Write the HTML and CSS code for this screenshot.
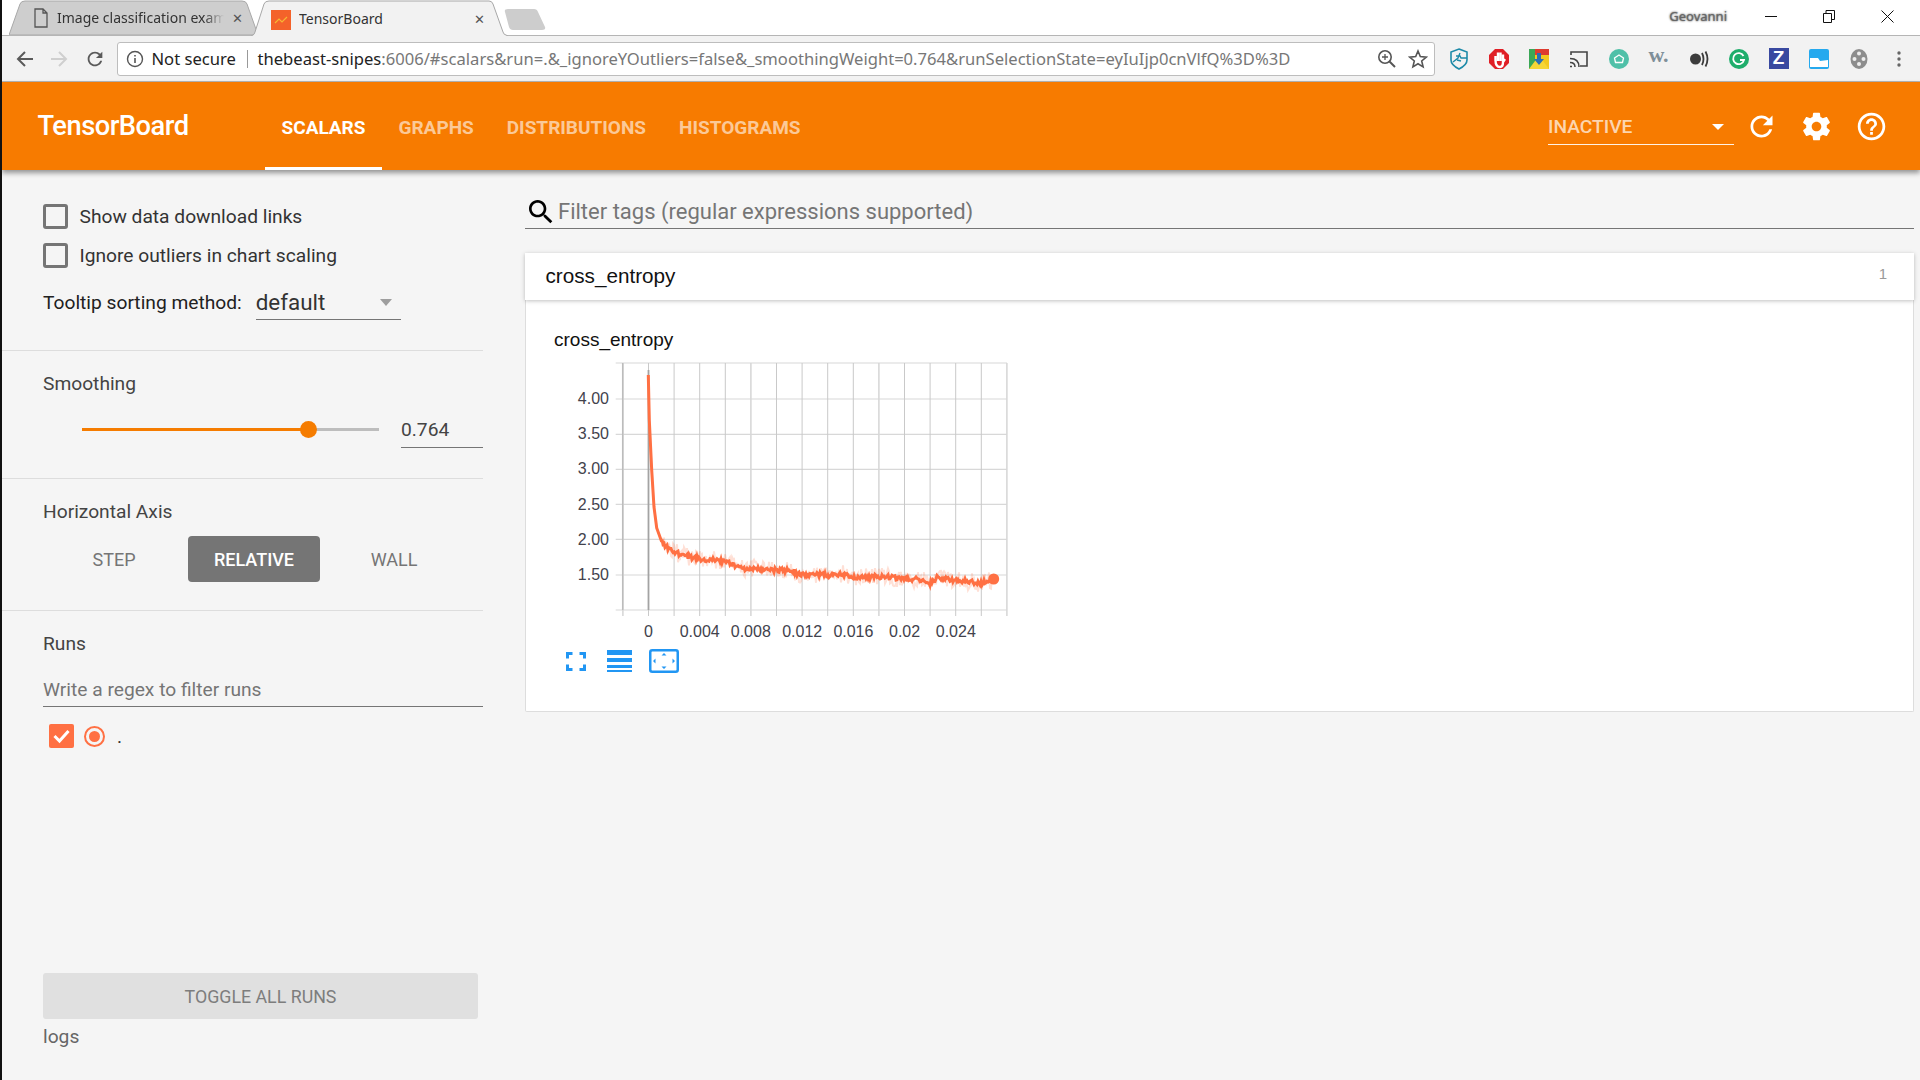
FILE: index.html
```html
<!DOCTYPE html>
<html lang="en">
<head>
    <meta charset="UTF-8">
    <meta name="viewport" content="width=device-width, initial-scale=1.0">
    <title>TensorBoard</title>
    <link rel="stylesheet" href="styles.css">
</head>
<body>
    <!-- browser tabs -->
    <div class="tabstrip">
        <div class="tab tab-back">
            <svg class="tab-shape" viewBox="0 0 249 35"><path d="M0 35L11 4Q12 1 16 1L233 1Q237 1 238 4L249 35Z" fill="#cecece" stroke="#a8a8a8"/></svg>
            <svg class="fav" width="16" height="20" viewBox="0 0 16 20"><path d="M2 1h8l4 4v14H2zM10 1v4h4" fill="none" stroke="#555" stroke-width="1.3"/></svg>
            <span class="tab-title tab-title-fade">Image classification exam</span>
            <span class="tab-close">✕</span>
        </div>
        <div class="tab tab-front">
            <svg class="tab-shape" viewBox="0 0 257 36"><path d="M0 36L2 35Q3 35 4 32L13 4Q14 1 18 1L238 1Q241 1 242 4L252 32Q253 35 255 35L257 36" fill="#f2f2f2" stroke="#a8a8a8"/></svg>
            <svg class="fav-tb" width="20" height="20" viewBox="0 0 20 20"><rect width="20" height="20" fill="#f4622a"/><path d="M4 13l4-4 3 3 5-5" fill="none" stroke="#f7b733" stroke-width="1.2"/></svg>
            <span class="tab-title">TensorBoard</span>
            <span class="tab-close">✕</span>
        </div>
        <svg class="new-tab" width="42" height="22" viewBox="0 0 42 22"><path d="M1 3Q0 0 4 0L30 0Q33 0 34 3L41 18Q42 21 38 21L9 21Q6 21 5 18Z" fill="#cdcdcd"/></svg>
        <div class="window-ctrl">
            <span class="profile">Geovanni</span>
            <svg class="win-btn" width="12" height="12" viewBox="0 0 12 12"><path d="M0 6.5h12" stroke="#111"/></svg>
            <svg class="win-btn" width="12" height="13" viewBox="0 0 12 13"><path d="M.5 3.5h8v9h-8zM3 3.5v-3h8.5v9H8.5" fill="none" stroke="#111"/></svg>
            <svg class="win-btn" width="13" height="13" viewBox="0 0 13 13"><path d="M.5.5l12 12M12.5.5l-12 12" stroke="#111"/></svg>
        </div>
    </div>

    <!-- browser toolbar -->
    <div class="toolbar">
        <div class="nav-btns">
            <svg width="18" height="18" viewBox="0 0 18 18"><path d="M17 9H3M9 2L2 9l7 7" fill="none" stroke="#5a5a5a" stroke-width="2"/></svg>
            <svg width="18" height="18" viewBox="0 0 18 18"><path d="M1 9h14M9 2l7 7-7 7" fill="none" stroke="#cfcfcf" stroke-width="2"/></svg>
            <svg width="22" height="22" viewBox="0 0 24 24"><path fill="#5a5a5a" d="M17.65 6.35C16.2 4.9 14.21 4 12 4c-4.42 0-7.99 3.58-7.99 8s3.57 8 7.99 8c3.73 0 6.84-2.55 7.73-6h-2.08c-.82 2.33-3.04 4-5.65 4-3.31 0-6-2.69-6-6s2.69-6 6-6c1.66 0 3.14.69 4.22 1.78L13 11h7V4l-2.35 2.35z"/></svg>
        </div>
        <div class="omnibox">
            <svg class="info-icon" width="18" height="18" viewBox="0 0 18 18"><circle cx="9" cy="9" r="7.5" fill="none" stroke="#555" stroke-width="1.4"/><path d="M9 8v5M9 5v1.6" stroke="#555" stroke-width="1.6"/></svg>
            <span class="not-secure">Not secure</span>
            <span class="omni-sep"></span>
            <span class="url"><span class="url-host">thebeast-snipes</span>:6006/#scalars&amp;run=.&amp;_ignoreYOutliers=false&amp;_smoothingWeight=0.764&amp;runSelectionState=eyIuIjp0cnVlfQ%3D%3D</span>
            <svg class="omni-zoom" width="20" height="20" viewBox="0 0 20 20"><circle cx="8" cy="8" r="6.2" fill="none" stroke="#555" stroke-width="1.6"/><path d="M12.5 12.5L18 18" stroke="#555" stroke-width="2"/><path d="M5 8h6M8 5v6" stroke="#555" stroke-width="1.3"/></svg>
            <svg class="omni-star" width="20" height="20" viewBox="0 0 20 20"><path d="M10 2l2.3 5.6 6 .5-4.6 3.9 1.4 5.9L10 14.800l-5.100 3.100 1.400-5.900L1.700 8.100l6-.5z" fill="none" stroke="#555" stroke-width="1.6"/></svg>
        </div>
        <div class="ext-icons">
            <span class="ext"><svg width="22" height="24" viewBox="0 0 22 24"><path d="M11 2l8 3v8q0 5-8 9-8-4-8-9V5z" fill="none" stroke="#1d8aa8" stroke-width="1.6"/><path d="M5 15l5-4 2-5M8 9h4l1 2h6M9 13l4 1" fill="none" stroke="#1d8aa8" stroke-width="1.4"/></svg></span>
            <span class="ext"><svg width="20" height="22" viewBox="0 0 20 22"><path d="M6 1h8l6 6v8l-6 6H6l-6-6V7z" fill="#e01f26"/><path d="M6.500 13V8M9 13V4.500M11.500 13V4.500M14 14V6.500M6.500 12q0 7 4.500 7 3 0 3-5l2-3" fill="none" stroke="#fff" stroke-width="2.400"/></svg></span>
            <span class="ext"><svg width="20" height="20" viewBox="0 0 20 20"><rect width="20" height="20" fill="#f2c81e"/><path d="M0 0h20v6H0z" fill="#dd3b2f"/><path d="M0 0h6v20H0z" fill="#3aa757"/><path d="M0 20l20 0-6-8-8 0z" fill="#f6d636"/><path d="M8 4h4v6h3l-5 6-5-6h3z" fill="#2a6fb5"/></svg></span>
            <span class="ext"><svg width="20" height="18" viewBox="0 0 20 18"><path d="M2 5V2h16v14h-7" fill="none" stroke="#444" stroke-width="1.600"/><path d="M1 16.500h2M1 12.500q5 0 5 4.500M1 8.500q9 0 9 8.500" fill="none" stroke="#444" stroke-width="1.500"/></svg></span>
            <span class="ext"><svg width="20" height="20" viewBox="0 0 20 20"><circle cx="10" cy="10" r="10" fill="#4fc0a8"/><path d="M5.500 9L10 6l4.500 3-1 4.500h-7z" fill="none" stroke="#fff" stroke-width="1.300"/></svg></span>
            <span class="ext ext-w">w.</span>
            <span class="ext"><svg width="20" height="18" viewBox="0 0 20 18"><circle cx="6.500" cy="9" r="5.500" fill="#3c3c3c"/><path d="M13 3q3 6 0 12M16.500 1.500q4 7.500 0 15" fill="none" stroke="#3c3c3c" stroke-width="1.800"/></svg></span>
            <span class="ext"><svg width="20" height="20" viewBox="0 0 20 20"><circle cx="10" cy="10" r="10" fill="#1fae6c"/><path d="M14.500 7a5.500 5.500 0 1 0 .5 4h-4" fill="none" stroke="#fff" stroke-width="1.800"/></svg></span>
            <span class="ext ext-z">Z</span>
            <span class="ext"><svg width="20" height="20" viewBox="0 0 20 20"><rect width="20" height="20" rx="2" fill="#25a9ee"/><path d="M1 9h8l2 3 8-1v7H1z" fill="#fff"/></svg></span>
            <span class="ext"><svg width="20" height="22" viewBox="0 0 20 22"><ellipse cx="10" cy="11" rx="8.500" ry="10" fill="#8d8d8d"/><circle cx="10" cy="5.500" r="2" fill="#eee"/><circle cx="10" cy="16" r="2" fill="#eee"/><circle cx="5.500" cy="11" r="2" fill="#eee"/><circle cx="14.500" cy="11" r="2" fill="#eee"/></svg></span>
            <span class="ext"><svg width="4" height="16" viewBox="0 0 4 16"><circle cx="2" cy="2" r="1.700" fill="#666"/><circle cx="2" cy="8" r="1.700" fill="#666"/><circle cx="2" cy="14" r="1.700" fill="#666"/></svg></span>
        </div>
    </div>

    <!-- tensorboard header -->
    <header class="tb-header">
        <div class="tb-title">TensorBoard</div>
        <nav class="tb-tabs">
            <a class="tb-tab active">SCALARS</a>
            <a class="tb-tab">GRAPHS</a>
            <a class="tb-tab">DISTRIBUTIONS</a>
            <a class="tb-tab">HISTOGRAMS</a>
        </nav>
        <div class="tb-right">
            <div class="inactive-select">
                <span>INACTIVE</span>
                <span class="caret caret-white"></span>
            </div>
            <svg class="tb-icon" viewBox="0 0 24 24"><path d="M17.65 6.350C16.200 4.900 14.210 4 12 4c-4.420 0-7.990 3.580-7.990 8s3.570 8 7.990 8c3.730 0 6.840-2.550 7.730-6h-2.080c-.82 2.330-3.040 4-5.650 4-3.310 0-6-2.690-6-6s2.690-6 6-6c1.660 0 3.140.69 4.220 1.780L13 11h7V4l-2.350 2.350z"/></svg>
            <svg class="tb-icon" viewBox="0 0 24 24"><path d="M19.430 12.980c.04-.32.07-.64.07-.98s-.03-.66-.07-.98l2.110-1.650c.19-.15.24-.42.12-.64l-2-3.460c-.12-.22-.39-.3-.61-.22l-2.490 1c-.52-.4-1.080-.73-1.690-.98l-.38-2.650C14.460 2.180 14.250 2 14 2h-4c-.25 0-.46.18-.49.42l-.38 2.650c-.61.25-1.170.59-1.690.98l-2.490-1c-.23-.09-.49 0-.61.22l-2 3.460c-.13.22-.07.49.12.64l2.110 1.650c-.04.32-.07.65-.07.98s.03.66.07.98l-2.110 1.650c-.19.15-.24.42-.12.64l2 3.460c.12.22.39.3.61.22l2.490-1c.52.4 1.080.73 1.690.98l.38 2.650c.03.24.24.42.49.42h4c.25 0 .46-.18.49-.42l.38-2.650c.61-.25 1.170-.59 1.690-.98l2.490 1c.23.09.49 0 .61-.22l2-3.460c.12-.22.07-.49-.12-.64l-2.110-1.650zM12 15.500c-1.930 0-3.500-1.570-3.500-3.500s1.570-3.500 3.500-3.500 3.500 1.570 3.500 3.500-1.570 3.500-3.500 3.500z"/></svg>
            <svg class="tb-icon" viewBox="0 0 24 24"><path d="M11 18h2v-2h-2v2zm1-16C6.480 2 2 6.480 2 12s4.480 10 10 10 10-4.480 10-10S17.520 2 12 2zm0 18c-4.410 0-8-3.590-8-8s3.590-8 8-8 8 3.590 8 8-3.590 8-8 8zm0-14c-2.210 0-4 1.790-4 4h2c0-1.100.9-2 2-2s2 .9 2 2c0 2-3 1.750-3 5h2c0-2.250 3-2.500 3-5 0-2.210-1.790-4-4-4z"/></svg>
        </div>
    </header>

    <div class="content">
        <aside class="sidebar">
            <section class="side-section options">
                <label class="option"><span class="checkbox"></span>Show data download links</label>
                <label class="option"><span class="checkbox"></span>Ignore outliers in chart scaling</label>
                <div class="tooltip-row">
                    <span>Tooltip sorting method:</span>
                    <div class="tooltip-select">default<span class="caret caret-gray"></span></div>
                </div>
            </section>
            <section class="side-section smoothing">
                <div class="side-label">Smoothing</div>
                <div class="slider-row">
                    <div class="slider">
                        <div class="slider-fill"></div>
                        <div class="slider-knob"></div>
                    </div>
                    <div class="slider-value">0.764</div>
                </div>
            </section>
            <section class="side-section axis">
                <div class="side-label">Horizontal Axis</div>
                <div class="axis-btns">
                    <span class="axis-btn axis-step">STEP</span>
                    <span class="axis-btn axis-relative">RELATIVE</span>
                    <span class="axis-btn axis-wall">WALL</span>
                </div>
            </section>
            <section class="runs">
                <div class="side-label">Runs</div>
                <div class="runs-filter">Write a regex to filter runs</div>
                <div class="run-row">
                    <span class="run-check"><svg width="19" height="16" viewBox="0 0 19 16"><path d="M2.500 8l5 5L16.500 3" fill="none" stroke="#fff" stroke-width="3"/></svg></span>
                    <span class="run-radio"><span></span></span>
                    <span class="run-name">.</span>
                </div>
                <div class="toggle-btn">TOGGLE ALL RUNS</div>
                <div class="logdir">logs</div>
            </section>
        </aside>

        <main class="main">
            <div class="tag-filter">
                <svg width="32" height="32" viewBox="0 0 24 24"><path d="M15.500 14h-.79l-.28-.27C15.410 12.590 16 11.110 16 9.500 16 5.910 13.090 3 9.500 3S3 5.910 3 9.500 5.910 16 9.500 16c1.610 0 3.090-.59 4.230-1.570l.27.28v.79l5 4.990L20.490 19l-4.990-5zm-6 0C7.010 14 5 11.990 5 9.500S7.010 5 9.500 5 14 7.010 14 9.500 11.990 14 9.500 14z"/></svg>
                <span>Filter tags (regular expressions supported)</span>
            </div>
            <div class="category-head">
                <span>cross_entropy</span>
                <span class="category-count">1</span>
            </div>
            <div class="category-body">
                <div class="chart-title">cross_entropy</div>
                <svg id="chart" class="chart" viewBox="554 350 470 290" width="470" height="290">
                    <g id="grid"></g>
                    <g class="chart-y">
                        <text x="609" y="404">4.00</text>
                        <text x="609" y="439">3.50</text>
                        <text x="609" y="474">3.00</text>
                        <text x="609" y="509.500">2.50</text>
                        <text x="609" y="545">2.00</text>
                        <text x="609" y="580">1.50</text>
                    </g>
                    <g class="chart-x">
                        <text x="648.500" y="637">0</text>
                        <text x="699.700" y="637">0.004</text>
                        <text x="750.800" y="637">0.008</text>
                        <text x="802.200" y="637">0.012</text>
                        <text x="853.400" y="637">0.016</text>
                        <text x="904.600" y="637">0.02</text>
                        <text x="955.800" y="637">0.024</text>
                    </g>
                    <path id="line-raw" class="line-raw"/>
                    <path id="line-smooth" class="line-smooth"/>
                    <circle cx="993.700" cy="579" r="5.500" fill="#ff7043"/>
                </svg>
                <div class="chart-actions">
                    <svg width="20" height="19" viewBox="0 0 20 19"><path d="M1.500 6.500V1.500H6.500M13.500 1.500H18.500V6.500M18.500 12.500V17.500H13.500M6.500 17.500H1.500V12.500" fill="none" stroke="#2196f3" stroke-width="3"/></svg>
                    <svg width="25" height="22" viewBox="0 0 25 22"><path d="M0 0h25v5H0zM0 8h25v4H0zM0 15h25v3H0zM0 20h25v2H0z" fill="#2196f3"/></svg>
                    <svg width="30" height="24" viewBox="0 0 30 24"><rect x="1.250" y="1.250" width="27.500" height="21.500" rx="2" fill="none" stroke="#2196f3" stroke-width="2.500"/><path d="M15 4l2.500 2.500h-5zM15 20l2.500-2.500h-5zM4 12l2.500-2.500v5zM26 12l-2.500-2.500v5z" fill="#2196f3"/></svg>
                </div>
            </div>
        </main>
    </div>
    <script src="script.js"></script>
</body>
</html>
```

FILE: styles.css
```css
* {
    box-sizing: border-box;
}

body {
    margin: 0;
    height: 100vh;
    overflow: hidden;
    display: flex;
    flex-direction: column;
    background: #f5f5f5;
    border-left: 2px solid #111;
    font-family: Roboto, sans-serif;
    color: #212121;
}

/* browser chrome */
.tabstrip {
    height: 35px;
    display: flex;
    background: #fff;
    padding-left: 7px;
    flex-shrink: 0;
}

.tab {
    position: relative;
    height: 35px;
    display: flex;
    align-items: center;
    font-family: "Noto Sans", sans-serif;
    font-size: 14px;
    color: #333;
}

.tab-back {
    width: 249px;
    margin-right: -7px;
    padding-left: 24px;
}

.tab-front {
    width: 257px;
    height: 36px;
    z-index: 1;
    padding-left: 20px;
}

.tab-shape {
    position: absolute;
    left: 0;
    top: 0;
    width: 100%;
    height: 100%;
}

.fav,
.fav-tb,
.tab-title,
.tab-close {
    position: relative;
}

.fav {
    margin-right: 8px;
}

.fav-tb {
    margin-right: 8px;
    margin-top: 3px;
}

.tab-title {
    white-space: nowrap;
    overflow: hidden;
}

.tab-back .tab-title {
    width: 167px;
    -webkit-mask-image: linear-gradient(to right, #000 88%, transparent);
    mask-image: linear-gradient(to right, #000 88%, transparent);
}

.tab-front .tab-title {
    width: 175px;
    margin-top: 1px;
}

.tab-close {
    font-size: 13px;
    color: #555;
}

.tab-back .tab-close {
    margin-left: 8px;
}

.tab-front .tab-close {
    margin-top: 2px;
}

.new-tab {
    margin: 9px 0 0 -4px;
}

.window-ctrl {
    margin-left: auto;
    display: flex;
    align-items: center;
    height: 32px;
    padding-right: 26px;
}

.profile {
    font-family: "Noto Sans", sans-serif;
    font-size: 13px;
    color: #666;
    text-shadow: 0 0 2px #222;
    margin-right: 38px;
}

.win-btn {
    margin-left: 46px;
}

.win-btn:first-of-type {
    margin-left: 0;
}

.toolbar {
    height: 47px;
    display: flex;
    align-items: center;
    background: #f2f2f2;
    border-top: 1px solid #b5b5b5;
    border-bottom: 1px solid #b5b5b5;
    flex-shrink: 0;
}

.nav-btns {
    width: 114.500px;
    display: flex;
    align-items: center;
    gap: 16px;
    padding-left: 14px;
}

.omnibox {
    width: 1318px;
    height: 34px;
    display: flex;
    align-items: center;
    background: #fff;
    border: 1px solid #bdbdbd;
    border-radius: 3px;
    font-family: "Noto Sans", sans-serif;
    font-size: 16.600px;
    white-space: nowrap;
}

.info-icon {
    margin-left: 8px;
    margin-right: 8px;
}

.not-secure {
    width: 95px;
    color: #222;
}

.omni-sep {
    width: 1px;
    height: 18px;
    background: #999;
    margin-right: 10px;
}

.url {
    width: 1112px;
    color: #777;
}

.url-host {
    color: #222;
}

.omni-zoom {
    margin-left: 7px;
}

.omni-star {
    margin-left: 11px;
}

.ext-icons {
    display: flex;
    padding-left: 4px;
}

.ext {
    width: 40px;
    height: 26px;
    display: flex;
    align-items: center;
    justify-content: center;
}

.ext-w {
    font-family: "Liberation Serif", serif;
    font-weight: bold;
    font-size: 22px;
    color: #7f8f99;
    padding-bottom: 8px;
}

.ext-z {
    width: 20px;
    height: 21px;
    margin: 2px 10px 0;
    background: #3949a0;
    color: #fff;
    font-family: "Liberation Sans", sans-serif;
    font-weight: bold;
    font-size: 19px;
}

/* tensorboard header */
.tb-header {
    height: 88px;
    display: flex;
    align-items: center;
    background: #f77b00;
    color: #fff;
    box-shadow: 0 3px 5px rgba(0, 0, 0, 0.4);
    position: relative;
    z-index: 2;
    flex-shrink: 0;
}

.tb-title {
    width: 263px;
    padding-left: 35.500px;
    font-size: 27.300px;
    font-weight: 500;
    letter-spacing: -0.5px;
}

.tb-tabs {
    display: flex;
    height: 100%;
}

.tb-tab {
    display: flex;
    align-items: center;
    padding: 5px 16.500px 0;
    font-size: 19px;
    font-weight: 700;
    color: rgba(255, 255, 255, 0.6);
    border-bottom: 3px solid transparent;
}

.tb-tab.active {
    color: #fff;
    border-bottom-color: #fff;
}

.tb-right {
    margin-left: auto;
    display: flex;
    align-items: center;
    padding-right: 32px;
}

.inactive-select {
    width: 186px;
    height: 36px;
    display: flex;
    align-items: center;
    justify-content: space-between;
    padding-right: 10px;
    border-bottom: 1px solid rgba(255, 255, 255, 0.9);
    font-size: 19.200px;
    font-weight: 500;
    color: rgba(255, 255, 255, 0.7);
    margin-top: 2px;
    margin-right: 11px;
}

.caret {
    width: 0;
    height: 0;
    border-left: 6px solid transparent;
    border-right: 6px solid transparent;
}

.caret-white {
    border-top: 6.500px solid #fff;
}

.caret-gray {
    border-top: 7px solid #9e9e9e;
    margin-right: 9px;
    margin-top: 2px;
}

.tb-icon {
    width: 33px;
    height: 33px;
    fill: #fff;
    margin-left: 22px;
}

.tb-icon:first-of-type {
    margin-left: 0;
}

/* main layout */
.content {
    flex: 1;
    display: flex;
    min-height: 0;
}

.sidebar {
    width: 481px;
    flex-shrink: 0;
    display: flex;
    flex-direction: column;
    font-size: 19.200px;
}

.side-section {
    border-bottom: 1px solid #ddd;
    padding-left: 41px;
}

.options {
    height: 181px;
    padding-top: 34px;
}

.option {
    height: 25px;
    margin-bottom: 14px;
    display: flex;
    align-items: center;
    gap: 11.500px;
    color: #333;
}

.checkbox {
    width: 25px;
    height: 25px;
    border: 3px solid #757575;
    border-radius: 3px;
}

.tooltip-row {
    margin-top: 16px;
    display: flex;
    align-items: center;
    gap: 14px;
}

.tooltip-select {
    width: 145px;
    height: 36px;
    display: flex;
    align-items: center;
    justify-content: space-between;
    border-bottom: 1px solid #757575;
    font-size: 22.400px;
    color: #333;
}

.side-label {
    height: 24px;
    line-height: 24px;
    color: #444;
}

.smoothing {
    height: 128px;
    padding-top: 21px;
}

.slider-row {
    display: flex;
    margin-top: 17px;
    height: 35px;
}

.slider {
    position: relative;
    width: 297px;
    height: 3px;
    margin: 15px 0 0 39px;
    background: #bdbdbd;
}

.slider-fill {
    width: 76.400%;
    height: 100%;
    background: #f57c00;
}

.slider-knob {
    position: absolute;
    left: 76.400%;
    top: -7px;
    width: 17px;
    height: 17px;
    margin-left: -8.500px;
    border-radius: 50%;
    background: #f57c00;
}

.slider-value {
    flex: 1;
    margin-left: 22px;
    border-bottom: 1px solid #757575;
    color: #444;
    line-height: 34px;
}

.axis {
    height: 132px;
    padding-top: 21px;
}

.axis-btns {
    display: flex;
    margin-top: 12px;
}

.axis-btn {
    height: 46px;
    display: flex;
    align-items: center;
    justify-content: center;
    font-size: 18px;
    color: #757575;
}

.axis-step {
    width: 142px;
    margin-right: 3px;
}

.axis-relative {
    width: 132px;
    background: #757575;
    color: #fff;
    font-weight: 500;
    border-radius: 4px;
}

.axis-wall {
    width: 148px;
}

.runs {
    flex: 1;
    display: flex;
    flex-direction: column;
    padding: 21px 0 31px 41px;
}

.runs-filter {
    height: 39px;
    margin-top: 12px;
    line-height: 43px;
    color: #757575;
    border-bottom: 1px solid #757575;
}

.run-row {
    display: flex;
    align-items: center;
    margin: 17px 0 0 6px;
}

.run-check {
    width: 25px;
    height: 24px;
    display: flex;
    align-items: center;
    justify-content: center;
    background: #ff7043;
    border-radius: 2px;
}

.run-radio {
    width: 21px;
    height: 21px;
    margin-left: 10px;
    display: flex;
    align-items: center;
    justify-content: center;
    border: 2px solid #ff7043;
    border-radius: 50%;
}

.run-radio span {
    width: 11px;
    height: 11px;
    border-radius: 50%;
    background: #ff7043;
}

.run-name {
    margin-left: 12px;
    color: #333;
}

.toggle-btn {
    margin-top: auto;
    width: 435px;
    height: 46px;
    display: flex;
    align-items: center;
    justify-content: center;
    background: #e0e0e0;
    border-radius: 3px;
    color: #7d7d7d;
    font-size: 17.800px;
}

.logdir {
    height: 24px;
    line-height: 24px;
    margin-top: 6px;
    color: #666;
}

.main {
    flex: 1;
    padding: 26px 6px 0 42px;
    min-width: 0;
}

.tag-filter {
    height: 33px;
    display: flex;
    align-items: center;
    gap: 1px;
    border-bottom: 1.500px solid #757575;
    color: #757575;
    font-size: 22px;
}

.tag-filter svg {
    flex-shrink: 0;
}

.tag-filter span {
    margin-top: -1px;
}

.category-head {
    margin-top: 24px;
    height: 47px;
    display: flex;
    align-items: center;
    justify-content: space-between;
    padding: 0 27px 1px 20.500px;
    background: #fff;
    box-shadow: 0 1px 4px rgba(0, 0, 0, 0.25);
    color: #111;
    font-family: "Liberation Sans", sans-serif;
    font-size: 20.700px;
    position: relative;
}

.category-count {
    font-size: 15px;
    color: #9a9a9a;
    margin-top: -5px;
}

.category-body {
    height: 412px;
    padding: 28px 0 0 28px;
    background: #fff;
    border: 1px solid #ddd;
    border-top: none;
    border-radius: 0 0 2px 2px;
}

.chart-title {
    height: 24px;
    line-height: 24px;
    font-family: "Liberation Sans", sans-serif;
    font-size: 19px;
    color: #111;
}

.chart {
    display: block;
    margin-top: -2px;
}

.chart text {
    font-family: "Liberation Sans", sans-serif;
    font-size: 16px;
    fill: #42424c;
}

.chart-y {
    text-anchor: end;
}

.chart-x {
    text-anchor: middle;
}

.line-raw {
    fill: none;
    stroke: #ff7043;
    stroke-width: 2;
    opacity: 0.22;
}

.line-smooth {
    fill: none;
    stroke: #ff7043;
    stroke-width: 3;
}

.chart-actions {
    display: flex;
    align-items: center;
    margin: 9px 0 0 12px;
    gap: 21px;
}

.chart-actions svg:last-child {
    margin-left: -4px;
}
```

FILE: script.js
```js
// draws the grid and the noisy cross_entropy line
document.addEventListener('DOMContentLoaded', () => {
    const gridEl = document.getElementById('grid');
    const rawEl = document.getElementById('line-raw');
    const smoothEl = document.getElementById('line-smooth');

    const left = 622.7, right = 1007, top = 363, bottom = 610;
    const yLines = [363, 399, 434.3, 469.3, 504.3, 539.3, 575, 610];
    const zeroX = 648.5, stepX = 25.6;

    // outline of the curve, read from the plot
    const curve = [
        [648.3, 375], [649.3, 420], [651.7, 470], [654, 507], [656.7, 528],
        [661.7, 541.7], [670, 550], [680, 554.3], [696.7, 558.3], [713, 560],
        [730, 562.7], [743, 569.3], [750, 567.3], [770, 570], [793, 570.7],
        [800, 575], [830, 575], [842, 574], [853, 577.3], [880, 576.7],
        [887, 576], [897, 578.3], [923, 580], [930, 583.3], [937, 577.3],
        [950, 580], [973, 581.7], [980, 584], [993, 579]
    ];

    let seed = 42;
    function rand() {
        seed = (seed * 16807) % 2147483647;
        return seed / 2147483647 - 0.5;
    }

    function addLine(x1, y1, x2, y2, color, width) {
        const line = document.createElementNS('http://www.w3.org/2000/svg', 'line');
        line.setAttribute('x1', x1);
        line.setAttribute('y1', y1);
        line.setAttribute('x2', x2);
        line.setAttribute('y2', y2);
        line.setAttribute('stroke', color);
        line.setAttribute('stroke-width', width);
        gridEl.appendChild(line);
    }

    yLines.forEach((y) => {
        addLine(left - 7, y, right, y, '#d8d8d8', 1.2);
    });

    for (let i = -1; i <= 14; i++) {
        const x = zeroX + i * stepX;
        const strong = i === -1 || i === 4 || i === 9 || i === 14;
        addLine(x, top, x, bottom + 6, strong ? '#d8d8d8' : '#c9c9c9', strong ? 1.6 : 1);
    }

    addLine(left, top, left, bottom, '#bcbcbc', 1.5);
    addLine(zeroX, 370, zeroX, bottom, '#a3a3a3', 1.8);

    function curveAt(x) {
        for (let i = 1; i < curve.length; i++) {
            if (x <= curve[i][0]) {
                const a = curve[i - 1], b = curve[i];
                return a[1] + (b[1] - a[1]) * (x - a[0]) / (b[0] - a[0]);
            }
        }
        return curve[curve.length - 1][1];
    }

    let smoothPath = '', rawPath = '';
    curve.slice(0, 6).forEach((p, i) => {
        smoothPath += (i ? 'L' : 'M') + p[0] + ' ' + p[1];
    });
    rawPath = smoothPath;

    for (let x = 662; x <= 993; x += 1) {
        const y = curveAt(x);
        smoothPath += 'L' + x + ' ' + (y + rand() * 5).toFixed(1);
        rawPath += 'L' + x + ' ' + (y + rand() * 18).toFixed(1);
    }

    smoothEl.setAttribute('d', smoothPath);
    rawEl.setAttribute('d', rawPath);
});
```
